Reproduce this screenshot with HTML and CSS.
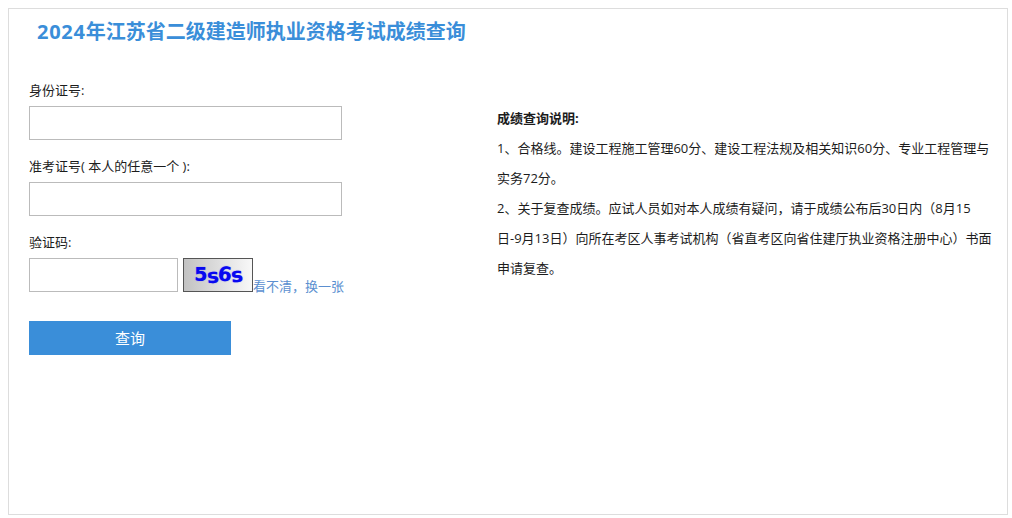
FILE: index.html
```html
<!DOCTYPE html>
<html lang="zh">
<head>
<meta charset="utf-8">
<title>成绩查询</title>
<link rel="stylesheet" href="styles.css">
</head>
<body>
<main class="frame">
  <h1 class="title"><span class="year">2024</span>年江苏省二级建造师执业资格考试成绩查询</h1>
  <div class="columns">
    <form class="form">
      <label class="label">身份证号:</label>
      <input class="input" type="text">
      <label class="label">准考证号( 本人的任意一个 ):</label>
      <input class="input" type="text">
      <label class="label">验证码:</label>
      <div class="captcha-row">
        <input class="input input-short" type="text">
        <span class="captcha"><span class="c1">5</span><span class="c2">s</span><span class="c3">6</span><span class="c4">s</span></span>
        <a class="refresh">看不清，换一张</a>
      </div>
      <button class="submit" type="button">查询</button>
    </form>
    <section class="notes">
      <p class="note-head">成绩查询说明:</p>
      <p>1、合格线。建设工程施工管理60分、建设工程法规及相关知识60分、专业工程管理与实务72分。</p>
      <p>2、关于复查成绩。应试人员如对本人成绩有疑问，请于成绩公布后30日内（8月15日-9月13日）向所在考区人事考试机构（省直考区向省住建厅执业资格注册中心）书面申请复查。</p>
    </section>
  </div>
</main>
</body>
</html>
```
FILE: styles.css
```css
* { box-sizing: border-box; }
html, body { height: 100%; }
body {
  margin: 0;
  padding: 8px 4px 3px 8px;
  background: #fff;
  color: #1c1c1c;
  font-family: "Open Sans", "Noto Sans CJK SC", sans-serif;
  font-size: 13px;
  text-spacing-trim: space-all;
}
.frame {
  height: 507px;
  border: 1px solid #ddd;
}
.title {
  margin: 0;
  padding: 9px 0 0 28px;
  font-size: 20px;
  line-height: 28px;
  font-weight: 700;
  color: #3a8ed9;
}
.year { letter-spacing: 0.75px; }
.columns {
  display: flex;
  padding: 34px 0 0 20px;
}
.form {
  width: 468px;
  flex: none;
  display: flex;
  flex-direction: column;
  align-items: flex-start;
}
.label {
  height: 20px;
  line-height: 20px;
  margin-bottom: 6px;
}
.input {
  display: block;
  width: 313px;
  height: 34px;
  margin: 0 0 16px;
  padding: 0 6px;
  border: 1px solid #bbb;
  background: #fff;
}
.captcha-row {
  display: flex;
  align-items: flex-end;
  margin-bottom: 29px;
}
.input-short {
  width: 149px;
  margin: 0 5px 0 0;
}
.captcha {
  display: flex;
  justify-content: center;
  width: 70px;
  height: 34px;
  padding-top: 1px;
  border: 1px solid #555;
  background: linear-gradient(90deg, #c2c2c2, #f8f8f8);
  color: #0808f0;
  font-family: "DejaVu Sans", sans-serif;
  font-size: 20px;
  font-weight: 700;
  line-height: 30px;
  letter-spacing: -0.8px;
  text-shadow: 0 0 1px rgba(40, 40, 255, 0.7);
}
.c1 { transform: translateY(-1px) scaleX(0.95); }
.c2 { transform: translateY(1px) rotate(-4deg); }
.c3 { transform: translateY(-1px) rotate(6deg); }
.c4 { transform: translateY(0) rotate(-6deg); }
.refresh {
  color: #5b8fd0;
  line-height: 18px;
  margin-bottom: -3px;
}
.submit {
  width: 202px;
  height: 34px;
  border: 0;
  padding: 0 0 2px;
  background: #3a8ed9;
  color: #fff;
  font: inherit;
  font-size: 15px;
}
.notes {
  width: 497px;
  padding-top: 23px;
  line-height: 30px;
}
.notes p { margin: 0; }
.note-head { font-weight: 700; }
```
